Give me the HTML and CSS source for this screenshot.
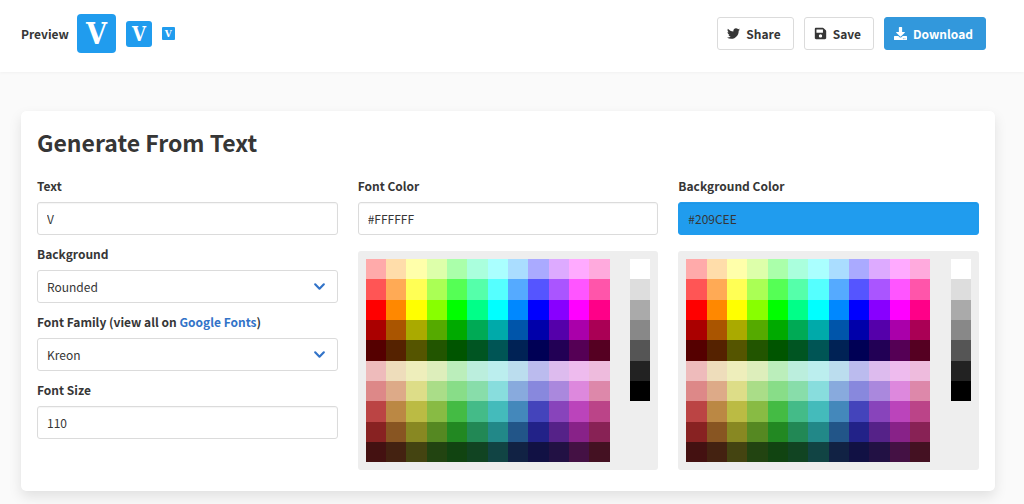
FILE: index.html
```
<!DOCTYPE html>
<html lang="en">
<head>
  <meta charset="UTF-8">
  <meta name="viewport" content="width=device-width, initial-scale=1">
  <title>Generate From Text</title>
  <link rel="stylesheet" href="styles.css">
</head>
<body>

<header class="toolbar">
  <div class="preview">
    <span class="preview-label">Preview</span>
    <div class="icons">
      <span class="icon-preview large">V</span>
      <span class="icon-preview medium">V</span>
      <span class="icon-preview small">V</span>
    </div>
  </div>
  <div class="buttons">
    <button type="button" class="button">
      <svg class="icon" viewBox="0 0 512 512"><path d="M459.4 151.7c.3 4.5.3 9.1.3 13.6 0 138.7-105.6 298.6-298.6 298.6-59.5 0-114.7-17.2-161.1-47.1 8.4 1 16.6 1.3 25.3 1.3 49.1 0 94.2-16.6 130.3-44.8-46.1-1-84.8-31.2-98.1-72.8 6.5 1 13 1.6 19.8 1.6 9.4 0 18.8-1.3 27.6-3.6-48.1-9.7-84.1-52-84.1-103v-1.3c14 7.8 30.2 12.7 47.4 13.3-28.3-18.8-46.8-51-46.8-87.4 0-19.5 5.2-37.4 14.3-53 51.7 63.7 129.3 105.3 216.4 109.8-1.6-7.8-2.6-15.9-2.6-24 0-57.8 46.8-104.9 104.9-104.9 30.2 0 57.5 12.7 76.7 33.1 23.7-4.5 46.5-13.3 66.6-25.3-7.8 24.4-24.4 44.8-46.1 57.8 21.1-2.3 41.6-8.1 60.4-16.2-14.3 20.8-32.2 39.3-52.6 54.3z"/></svg>
      Share
    </button>
    <button type="button" class="button">
      <svg class="icon" viewBox="0 0 448 512"><path d="M433.9 129.9l-83.9-83.9A48 48 0 0 0 316.1 32H48C21.5 32 0 53.5 0 80v352c0 26.5 21.5 48 48 48h352c26.5 0 48-21.5 48-48V163.9a48 48 0 0 0-14.1-34zM224 416c-35.3 0-64-28.7-64-64s28.7-64 64-64 64 28.7 64 64-28.7 64-64 64zm96-304.5V212c0 6.6-5.4 12-12 12H76c-6.6 0-12-5.4-12-12V108c0-6.6 5.4-12 12-12h228.5c3.2 0 6.2 1.3 8.5 3.5l3.5 3.5c2.2 2.2 3.5 5.3 3.5 8.5z"/></svg>
      Save
    </button>
    <button type="button" class="button primary">
      <svg class="icon" viewBox="0 0 512 512"><path d="M216 0h80c13.3 0 24 10.7 24 24v168h87.7c17.8 0 26.7 21.5 14.1 34.1L269.7 378.3c-7.5 7.5-19.8 7.5-27.3 0L90.1 226.1c-12.6-12.6-3.7-34.1 14.1-34.1H192V24c0-13.3 10.7-24 24-24zm296 376v112c0 13.3-10.7 24-24 24H24c-13.3 0-24-10.7-24-24V376c0-13.3 10.7-24 24-24h146.7l49 49c20.1 20.1 52.5 20.1 72.6 0l49-49H488c13.3 0 24 10.7 24 24zm-124 88c0-11-9-20-20-20s-20 9-20 20 9 20 20 20 20-9 20-20zm64 0c0-11-9-20-20-20s-20 9-20 20 9 20 20 20 20-9 20-20z"/></svg>
      Download
    </button>
  </div>
</header>

<main class="box">
  <h1 class="title">Generate From Text</h1>

  <form class="columns">
    <div class="column">
      <div class="field">
        <label class="label" for="text">Text</label>
        <input class="input" id="text" type="text" value="V">
      </div>
      <div class="field">
        <label class="label" for="background">Background</label>
        <div class="select">
          <select class="input" id="background">
            <option>Square</option>
            <option>Circle</option>
            <option selected>Rounded</option>
          </select>
          <svg class="chevron" viewBox="0 0 12 8"><path d="M2 2l4 4 4-4"/></svg>
        </div>
      </div>
      <div class="field">
        <label class="label" for="family">Font Family (view all on <a href="#fonts">Google Fonts</a>)</label>
        <div class="select">
          <select class="input" id="family">
            <option selected>Kreon</option>
            <option>Roboto</option>
            <option>Lato</option>
          </select>
          <svg class="chevron" viewBox="0 0 12 8"><path d="M2 2l4 4 4-4"/></svg>
        </div>
      </div>
      <div class="field">
        <label class="label" for="size">Font Size</label>
        <input class="input" id="size" type="text" value="110">
      </div>
    </div>

    <div class="column">
      <div class="field">
        <label class="label" for="font-color">Font Color</label>
        <input class="input font-color" id="font-color" type="text" value="#FFFFFF">
      </div>
      <div class="palette" data-input="font-color"></div>
    </div>

    <div class="column">
      <div class="field">
        <label class="label" for="bg-color">Background Color</label>
        <input class="input bg-color" id="bg-color" type="text" value="#209CEE">
      </div>
      <div class="palette" data-input="bg-color"></div>
    </div>
  </form>
</main>

<script src="script.js"></script>
</body>
</html>
```
FILE: styles.css
```
* { box-sizing: border-box; }

body {
  margin: 0;
  background: #fafafa;
  color: #363636;
  font-family: "Noto Sans CJK JP", "Noto Sans", sans-serif;
  font-size: 12px;
  line-height: 18px;
}

button, input, select { font: inherit; color: inherit; }
a { color: #3273c8; text-decoration: none; }

/* toolbar */
.toolbar {
  display: flex;
  justify-content: space-between;
  align-items: center;
  padding: 14px 38px 19px 21px;
  background: #fff;
  box-shadow: 0 1px 3px rgba(0,0,0,0.04);
}
.preview, .icons, .buttons { display: flex; align-items: center; gap: 10px; }
.preview { gap: 8px; }
.preview-label { font-weight: bold; }

.icon-preview {
  display: flex;
  align-items: center;
  justify-content: center;
  background: #209cee;
  color: #fff;
  font-family: "DejaVu Serif Condensed", "DejaVu Serif", serif;
  font-weight: bold;
}
.large { width: 39px; height: 39px; border-radius: 4px; font-size: 30px; }
.medium { width: 26px; height: 26px; border-radius: 3px; font-size: 20px; }
.small { width: 13px; height: 13px; border-radius: 1px; font-size: 10px; }

.button {
  display: flex;
  align-items: center;
  gap: 6px;
  height: 33px;
  padding: 0 12px 0 9px;
  border: 1px solid #dbdbdb;
  border-radius: 3px;
  background: #fff;
  font-weight: bold;
  cursor: pointer;
}
.primary { background: #3298dc; border-color: #3298dc; color: #fff; }
.icon { width: 13px; height: 13px; fill: currentColor; }

/* generator */
.box {
  margin: 39px 29px 13px 21px;
  padding: 15px 16px 21px;
  background: #fff;
  border-radius: 5px;
  box-shadow: 0 6px 13px rgba(10,10,10,0.1), 0 0 1px rgba(10,10,10,0.04);
}
.title { margin: 0 0 19px; font-size: 23px; line-height: 32px; }

.columns { display: grid; grid-template-columns: repeat(3, 1fr); gap: 20px; }
.field { margin-bottom: 10px; }
.label { display: block; margin-bottom: 7px; font-weight: bold; }

.input {
  display: block;
  width: 100%;
  height: 33px;
  padding: 0 9px;
  border: 1px solid #dbdbdb;
  border-radius: 3px;
  background: #fff;
  box-shadow: inset 0 1px 1px rgba(10,10,10,0.04);
}
.font-color { background: #ffffff; }
.bg-color { background: #209cee; border-color: #209cee; }

.select { position: relative; }
.select .input { appearance: none; box-shadow: none; }
.chevron {
  position: absolute;
  right: 12px;
  top: 12px;
  width: 13px;
  height: 9px;
  fill: none;
  stroke: #3273c8;
  stroke-width: 2;
  stroke-linecap: round;
  stroke-linejoin: round;
  pointer-events: none;
}

/* 12 hues, one empty column, then the greys */
.palette {
  display: grid;
  grid-template-columns: repeat(14, 1fr);
  margin-top: 16px;
  padding: 8px;
  background: #eee;
  border-radius: 3px;
}
.hues { grid-column: 1 / 13; display: grid; grid-template-columns: repeat(12, 1fr); }
.greys { grid-column: 14; align-self: start; display: grid; }
.swatch { padding: 0; border: 0; aspect-ratio: 1; cursor: pointer; }

@media (max-width: 700px) {
  .columns { grid-template-columns: 1fr; }
}
```
FILE: script.js
```
const hues = [
  "faa fda ffa dfa afa afd aff adf aaf daf faf fad",
  "f55 fa5 ff5 af5 5f5 5fa 5ff 5af 55f a5f f5f f5a",
  "f00 f80 ff0 8f0 0f0 0f8 0ff 08f 00f 80f f0f f08",
  "a00 a50 aa0 5a0 0a0 0a5 0aa 05a 00a 50a a0a a05",
  "500 520 550 250 050 052 055 025 005 205 505 502",
  "ebb edb eeb deb beb bed bee bde bbe dbe ebe ebd",
  "d88 da8 dd8 ad8 8d8 8da 8dd 8ad 88d a8d d8d d8a",
  "b44 b84 bb4 8b4 4b4 4b8 4bb 48b 44b 84b b4b b48",
  "822 852 882 582 282 285 288 258 228 528 828 825",
  "411 421 441 241 141 142 144 124 114 214 414 412"
].join(" ").split(" ");
const greys = "fff ddd aaa 888 555 222 000".split(" ");

function addSwatches(palette, name, colors) {
  const input = document.getElementById(palette.dataset.input);
  const group = document.createElement("div");
  group.className = name;
  colors.forEach(color => {
    const hex = "#" + color.replace(/./g, "$&$&").toUpperCase();
    const swatch = document.createElement("button");
    swatch.type = "button";
    swatch.className = "swatch";
    swatch.setAttribute("aria-label", hex);
    swatch.style.background = hex;
    swatch.addEventListener("click", () => {
      input.value = hex;
      input.style.background = hex;
    });
    group.appendChild(swatch);
  });
  palette.appendChild(group);
}

document.querySelectorAll(".palette").forEach(palette => {
  addSwatches(palette, "hues", hues);
  addSwatches(palette, "greys", greys);
});
```
